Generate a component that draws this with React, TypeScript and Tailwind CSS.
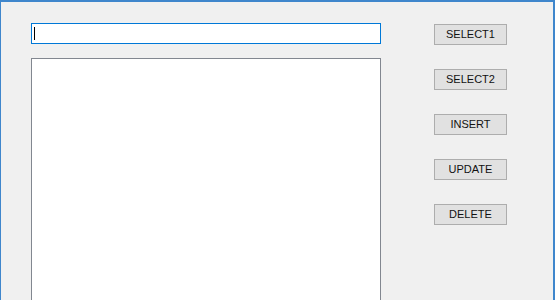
const buttons = ["SELECT1", "SELECT2", "INSERT", "UPDATE", "DELETE"];

export default function App() {
  return (
    <div className="w-[555px] h-[300px] overflow-hidden bg-[#f0f0f0] border-t-2 border-l border-r-2 border-[#3f86cc] font-['Liberation_Sans',Arial,sans-serif]">
      <div className="flex pl-[30px] pt-[21px]">
        <div className="flex flex-col w-[350px]">
          <div className="h-[21px] bg-white border border-[#0078d7] flex items-center pl-[2px]">
            <span className="block w-px h-[13px] bg-black" />
          </div>
          <div className="mt-[14px] h-[260px] bg-white border border-[#828790]" />
        </div>
        <div className="ml-[53px] pt-px flex flex-col gap-[24px]">
          {buttons.map((label) => (
            <button
              key={label}
              className="w-[73px] h-[21px] bg-[#e1e1e1] border border-[#adadad] text-[11px] leading-none text-[#111] flex items-center justify-center"
            >
              {label}
            </button>
          ))}
        </div>
      </div>
    </div>
  );
}
